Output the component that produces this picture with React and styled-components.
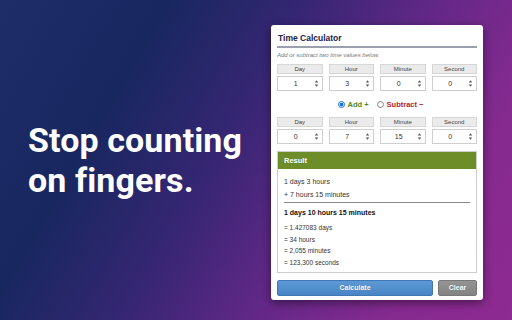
import React from 'react'
import styled, { createGlobalStyle } from 'styled-components'

const GlobalStyle = createGlobalStyle`
	html, body {
		margin: 0;
		padding: 0;
	}
	body {
		width: 512px;
		height: 320px;
		overflow: hidden;
		font-family: 'Liberation Sans', Arial, sans-serif;
	}
`

const Page = styled.div`
	display: flex;
	align-items: flex-start;
	width: 512px;
	height: 320px;
	background: linear-gradient(120deg, #1e2d68 0%, #182760 24%, #362673 44%, #652888 64%, #852a8f 82%, #8e2a92 100%);
`

const Pitch = styled.div`
	width: 271px;
	box-sizing: border-box;
	padding: 120px 0 0 28px;
`

const Headline = styled.h1`
	margin: 0;
	font-family: Roboto, 'Noto Sans', sans-serif;
	font-weight: 700;
	font-size: 34px;
	line-height: 40px;
	letter-spacing: 0.1px;
	color: #fff;
`

const Panel = styled.div`
	margin-top: 25px;
	width: 212px;
	height: 275px;
	box-sizing: border-box;
	padding: 7px 6px 4px 6px;
	background: #fff;
	border-radius: 3px;
	box-shadow: 0 3px 10px rgba(0, 0, 0, 0.45);
	display: flex;
	flex-direction: column;
`

const Title = styled.div`
	font-size: 8.5px;
	font-weight: 700;
	line-height: 12px;
	color: #1c2148;
	padding: 0 1px 2px;
	border-bottom: 2px solid #9aa0ad;
`

const Hint = styled.div`
	margin-top: 3px;
	font-size: 6px;
	font-style: italic;
	line-height: 8px;
	color: #777;
`

const Grid = styled.div`
	display: grid;
	grid-template-columns: repeat(4, 1fr);
	column-gap: 6px;
	margin-top: ${p => p.$top}px;
`

const Column = styled.div`
	display: flex;
	flex-direction: column;
	gap: 2px;
`

const Label = styled.div`
	height: 10px;
	box-sizing: border-box;
	background: #ebebeb;
	border: 1px solid #d6d6d6;
	font-size: 6px;
	line-height: 8px;
	text-align: center;
	color: #444;
`

const Field = styled.div`
	height: 15px;
	box-sizing: border-box;
	border: 1px solid #cfcfcf;
	display: flex;
	align-items: center;
	padding-right: 3px;
	background: #fff;
`

const Value = styled.span`
	flex: 1;
	text-align: center;
	font-size: 7px;
	color: #333;
`

const Spinner = styled.svg`
	width: 5px;
	height: 9px;
	display: block;
`

const Choice = styled.div`
	display: flex;
	justify-content: center;
	align-items: center;
	gap: 8px;
	height: 14px;
	margin-top: 7px;
	padding-left: 7px;
`

const Option = styled.span`
	display: flex;
	align-items: center;
	gap: 3px;
	font-size: 7.5px;
	font-weight: 700;
	color: ${p => p.$color};
`

const Radio = styled.span`
	width: 7px;
	height: 7px;
	box-sizing: border-box;
	border-radius: 50%;
	border: 1px solid ${p => (p.$on ? '#1a6fe0' : '#888')};
	background: ${p => (p.$on ? 'radial-gradient(circle, #1a6fe0 0 1.8px, #fff 2.1px)' : '#fff')};
`

const Result = styled.div`
	margin-top: 7px;
	border: 1px solid #cdcdcd;
	display: flex;
	flex-direction: column;
`

const ResultHead = styled.div`
	height: 17px;
	background: #6c8d28;
	color: #fff;
	font-size: 7.5px;
	font-weight: 700;
	line-height: 17px;
	padding-left: 6px;
`

const ResultBody = styled.div`
	padding: 6px 6px 4px 6px;
	color: #333;
`

const Line = styled.div`
	font-size: ${p => (p.$small ? 6.5 : 7)}px;
	font-weight: ${p => (p.$bold ? 700 : 400)};
	line-height: ${p => (p.$small ? 11.5 : 13)}px;
	color: ${p => (p.$bold ? '#111' : '#333')};
`

const Rule = styled.div`
	height: 1px;
	background: #888;
	margin: 1px 0 3px;
`

const Gap = styled.div`
	height: 3px;
`

const Actions = styled.div`
	display: flex;
	gap: 5px;
	margin-top: 7px;
`

const Button = styled.div`
	flex: ${p => (p.$grow ? 1 : '0 0 39px')};
	height: 16px;
	box-sizing: border-box;
	border-radius: 2px;
	border: 1px solid ${p => (p.$grow ? '#3f78b4' : '#777')};
	background: ${p =>
		p.$grow
			? 'linear-gradient(#5c9ad6, #4985c4)'
			: 'linear-gradient(#949494, #838383)'};
	color: #fff;
	font-size: 7px;
	font-weight: 700;
	line-height: 14px;
	text-align: center;
	text-shadow: 0 0 1px rgba(0, 0, 0, 0.3);
`

const SpinIcon = () => (
	<Spinner viewBox="0 0 5 9">
		<path d="M2.5 1.2 L4.2 3.4 H0.8 Z" fill="#555" />
		<path d="M2.5 7.8 L4.2 5.6 H0.8 Z" fill="#555" />
	</Spinner>
)

const TimeRow = ({ values, top }) => (
	<Grid $top={top}>
		{['Day', 'Hour', 'Minute', 'Second'].map((name, i) => (
			<Column key={name}>
				<Label>{name}</Label>
				<Field>
					<Value>{values[i]}</Value>
					<SpinIcon />
				</Field>
			</Column>
		))}
	</Grid>
)

export default class App extends React.Component {
	render() {
		return (
			<Page>
				<GlobalStyle />
				<Pitch>
					<Headline>
						Stop counting
						<br />
						on fingers.
					</Headline>
				</Pitch>
				<Panel>
					<Title>Time Calculator</Title>
					<Hint>Add or subtract two time values below.</Hint>
					<TimeRow values={[1, 3, 0, 0]} top={5} />
					<Choice>
						<Option $color="#4f8a1c">
							<Radio $on />
							Add +
						</Option>
						<Option $color="#b5232b">
							<Radio />
							Subtract −
						</Option>
					</Choice>
					<TimeRow values={[0, 7, 15, 0]} top={6} />
					<Result>
						<ResultHead>Result</ResultHead>
						<ResultBody>
							<Line>1 days 3 hours</Line>
							<Line>+ 7 hours 15 minutes</Line>
							<Rule />
							<Line $bold>1 days 10 hours 15 minutes</Line>
							<Gap />
							<Line $small>= 1.427083 days</Line>
							<Line $small>= 34 hours</Line>
							<Line $small>= 2,055 minutes</Line>
							<Line $small>= 123,300 seconds</Line>
						</ResultBody>
					</Result>
					<Actions>
						<Button $grow>Calculate</Button>
						<Button>Clear</Button>
					</Actions>
				</Panel>
			</Page>
		)
	}
}
